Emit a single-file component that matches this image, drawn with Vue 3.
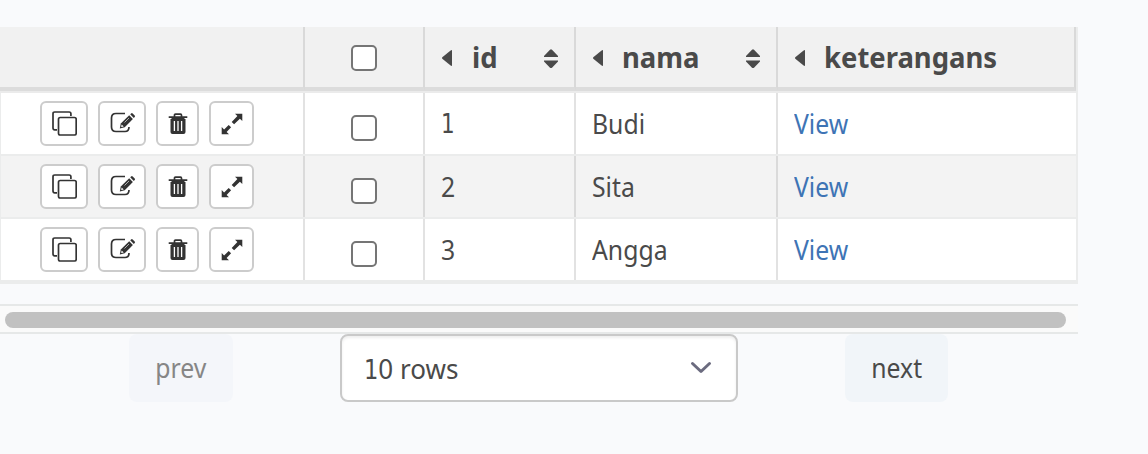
<script setup>
const rows = [
  { id: 1, nama: 'Budi' },
  { id: 2, nama: 'Sita' },
  { id: 3, nama: 'Angga' },
]
const headers = [
  { label: 'id', sortable: true },
  { label: 'nama', sortable: true },
  { label: 'keterangans', sortable: false },
]
</script>

<template>
  <main class="page">
    <section class="table">
      <div class="row head">
        <div class="cell"></div>
        <div class="cell check"><span class="box"></span></div>
        <div v-for="h in headers" :key="h.label" class="cell title">
          <svg class="left" width="10" height="16" viewBox="0 0 10 16"><path d="M10 0v16L8.6 15.5.3 8.7Q-.2 8 .3 7.3L8.6.5Z" /></svg>
          <b class="label">{{ h.label }}</b>
          <svg v-if="h.sortable" class="sort" width="14" height="20" viewBox="0 0 14 20"><path d="M0 8V7L6 .7Q7 0 8 .7L14 7v1ZM0 11.500h14v1L8 18.700q-1 .7-2 0L0 12.500Z" /></svg>
        </div>
      </div>
      <div v-for="r in rows" :key="r.id" class="row body">
        <div class="cell actions">
          <button class="act copy">
            <svg width="25" height="25" viewBox="0 0 25 25" fill="none" stroke="#333" stroke-width="1.7"><path d="M5 18.800H2.700Q1 18.800 1 17.100V2.700Q1 1 2.700 1H17.200Q18.900 1 18.900 2.700V5" /><rect x="6.500" y="6.500" width="17.700" height="17.500" rx="1.700" /></svg>
          </button>
          <button class="act edit">
            <svg width="26" height="22" viewBox="0 0 26 22"><path d="M15 1.500H6Q1.500 1.500 1.500 6v9q0 4.500 4.500 4.500h9q4 0 4-4.500" fill="none" stroke="#333" stroke-width="1.700" /><path d="m9.800 16.500 1-5L19.200 3.300l3.700 3.700-8.200 8.200Z" fill="#333" /><path d="m20.200 2.300.9-.9q.8-.7 1.600 0l2 2q.7.8 0 1.600l-.9.9Z" fill="#333" /><path d="m11.700 12.600 2 2-2 .5-.6-.6Z" fill="#fff" /><path d="m14.500 10.500 4.500-4.500" stroke="#fff" stroke-width=".6" /></svg>
          </button>
          <button class="act trash">
            <svg width="20" height="22" viewBox="0 0 20 22"><path d="M.7 4.200h18.600M6.500 4V2.200q0-1 1-1h5q1 0 1 1V4" fill="none" stroke="#333" stroke-width="1.700" /><path d="M2.500 6h15v13q0 2-2 2h-11q-2 0-2-2Z" fill="#333" /><path d="M3.500 4h13v3h-13Z" fill="#333" /><path d="M6.400 8v10M10 8v10M13.600 8v10" stroke="#fff" stroke-width="1.300" /></svg>
          </button>
          <button class="act expand">
            <svg width="22" height="22" viewBox="0 0 22 22"><path d="M14 .7h7.300V8L18.900 5.700l-5.800 5.600L10.700 8.900l5.700-5.800ZM.7 14l2.400 2.400 4.600-4.500 2.400 2.400-4.500 4.600L8 21.300H.7Z" fill="#333" /></svg>
          </button>
        </div>
        <div class="cell check"><span class="box"></span></div>
        <div class="cell value"><span class="text" :class="{ one: r.id === 1 }">{{ r.id }}</span></div>
        <div class="cell value"><span class="text">{{ r.nama }}</span></div>
        <div class="cell value"><a class="text link">View</a></div>
      </div>
    </section>
    <div class="track"><div class="thumb"></div></div>
    <nav class="pager">
      <button class="nav prev" disabled><span class="text">prev</span></button>
      <div class="select">
        <span class="text"><span class="one">1</span>0 rows</span>
        <svg width="22" height="14" viewBox="0 0 22 14" fill="none" stroke="#6b6b7f" stroke-width="3" stroke-linecap="round" stroke-linejoin="round"><path d="m2.500 2.500 8.500 8 8.500-8" /></svg>
      </div>
      <button class="nav next"><span class="text">next</span></button>
    </nav>
  </main>
</template>

<style>
body { background: #f9fafc; }
</style>

<style scoped>
* { box-sizing: border-box; }
.page {
  height: 454px;
  padding-top: 27px;
  overflow: hidden;
  background: #f9fafc;
  color: #4a4a4a;
  font: 28px/38px "Noto Sans", "Open Sans", sans-serif;
}
svg { display: block; flex: none; }
button { padding: 0; font: inherit; color: inherit; }
.table { width: 1078px; border-right: 2px solid #ebecec; border-bottom: 2px solid #ebecec; }
.row { display: grid; grid-template-columns: 305px 120px 151px 202px 298px; }
.head { height: 66px; background: #f1f1f1; border-bottom: 2px solid #ebebeb; }
.head .cell { border-right: 2px solid #d9d9d9; border-bottom: 4px solid #dcdcdc; }
.body { height: 63px; background: #fff; border-bottom: 2px solid #ebecec; }
.body .cell { border-right: 2px solid #e2e2e2; }
.body .cell:first-child { border-left: 1px solid #ebecec; }
.body .cell:last-child { border-right: 0; }
.body:nth-child(odd) { background: #f3f3f3; }
.body:nth-child(odd) .cell { border-right-color: #dadada; }
.cell { display: flex; }
.check { justify-content: center; }
.box { width: 26px; height: 26px; margin-top: 18px; border: 2px solid #757575; border-radius: 5px; background: #fff; }
.body .box { margin-top: 22px; }
.title { align-items: flex-start; padding-left: 17px; fill: #4a4a4a; }
.left { margin-top: 23px; }
.label { width: 78px; margin: 12px 0 0 19px; line-height: 36px; transform: scaleX(.98); transform-origin: left; white-space: nowrap; }
.sort { margin: 22px 16px 0 auto; }
.title:nth-child(3) .label { width: 26px; margin-left: 20px; }
.actions { padding: 8px 0 0 39px; gap: 10px; }
.act { display: flex; align-items: center; justify-content: center; width: 48px; height: 45px; border: 2px solid #ccc; border-radius: 6px; background: #fff; }
.copy svg { margin-left: 1px; }
.trash { width: 43px; }
.expand { width: 45px; }
.edit svg { margin: -2px 0 0 1px; }
.value { padding: 11px 0 0 16px; }
.text { display: block; height: 38px; transform: scaleX(.885); transform-origin: left; white-space: nowrap; }
.one { font-family: "DejaVu Sans Condensed", "DejaVu Sans", sans-serif; font-size: 27px; }
.value .one { margin-top: 1px; }
.link { color: #3e74b5; }
.track { width: 1078px; height: 30px; margin-top: 20px; padding: 6px 12px 0 5px; border: solid #e6e8e8; border-width: 2px 0; background: #fafafa; }
.thumb { height: 16px; border-radius: 8px; background: #c1c1c1; }
.pager { display: flex; justify-content: space-between; width: 948px; padding-left: 129px; }
.nav { display: flex; align-items: center; justify-content: center; width: 104px; height: 68px; border: 0; border-radius: 8px; background: #f1f5f9; }
.next { width: 103px; }
.nav .text { margin-top: -2px; transform-origin: center; }
.prev { background: #f4f6fa; color: #868686; }
.select { display: flex; justify-content: space-between; align-items: center; width: 398px; height: 68px; padding: 0 24px 0 22px; border: 2px solid #c9c9c9; border-radius: 8px; background: #fff; box-shadow: inset 0 2px 3px #eee; }
.select .text { transform: scaleX(.93); }
</style>
